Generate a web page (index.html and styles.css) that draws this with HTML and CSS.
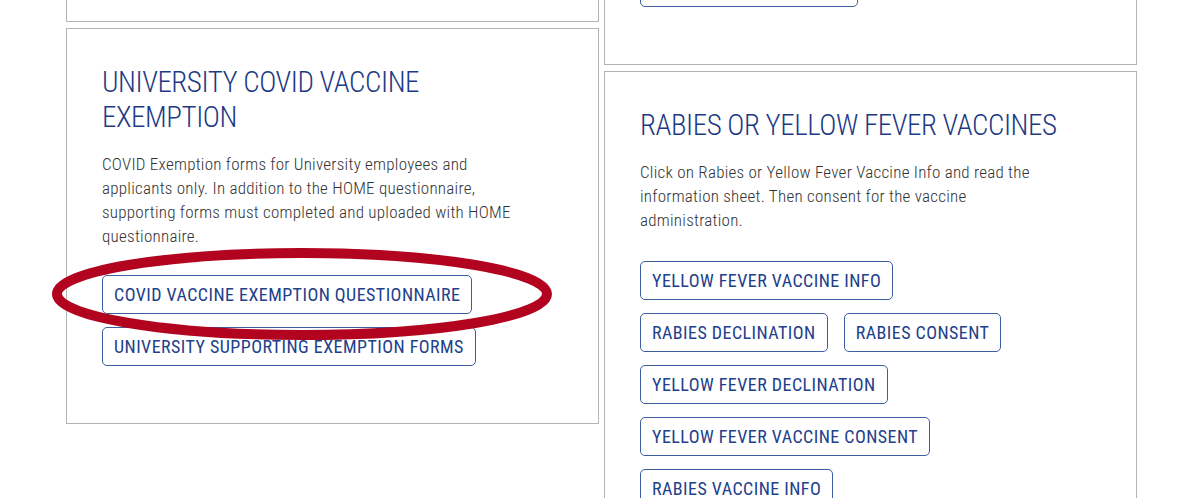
FILE: index.html
```html
<!DOCTYPE html>
<html lang="en">
<head>
<meta charset="utf-8">
<title>Vaccine Forms</title>
<link rel="stylesheet" href="styles.css">
</head>
<body>
<div class="page">
  <div class="grid">
    <div class="col">
      <section class="card card-stub-left"></section>
      <section class="card">
        <h2 class="card-title">UNIVERSITY COVID VACCINE EXEMPTION</h2>
        <p class="card-text">COVID Exemption forms for University employees and applicants only. In addition to the HOME questionnaire, supporting forms must completed and uploaded with HOME questionnaire.</p>
        <div class="btn-stack">
          <div class="btn-row"><a class="btn" href="#">COVID VACCINE EXEMPTION QUESTIONNAIRE</a></div>
          <div class="btn-row"><a class="btn" href="#">UNIVERSITY SUPPORTING EXEMPTION FORMS</a></div>
        </div>
      </section>
    </div>
    <div class="col">
      <section class="card card-stub-right">
        <div class="btn-stack">
          <div class="btn-row"><a class="btn btn-fixed" href="#" aria-label="More forms"></a></div>
        </div>
      </section>
      <section class="card card-rabies">
        <h2 class="card-title">RABIES OR YELLOW FEVER VACCINES</h2>
        <p class="card-text">Click on Rabies or Yellow Fever Vaccine Info and read the information sheet. Then consent for the vaccine administration.</p>
        <div class="btn-stack">
          <div class="btn-row"><a class="btn" href="#">YELLOW FEVER VACCINE INFO</a></div>
          <div class="btn-row"><a class="btn" href="#">RABIES DECLINATION</a><a class="btn" href="#">RABIES CONSENT</a></div>
          <div class="btn-row"><a class="btn" href="#">YELLOW FEVER DECLINATION</a></div>
          <div class="btn-row"><a class="btn" href="#">YELLOW FEVER VACCINE CONSENT</a></div>
          <div class="btn-row"><a class="btn" href="#">RABIES VACCINE INFO</a></div>
        </div>
      </section>
    </div>
  </div>
  <svg class="highlight" width="520" height="110" viewBox="0 0 520 110" aria-hidden="true">
    <ellipse cx="260" cy="55" rx="245" ry="41" fill="none" stroke="#b2031f" stroke-width="10"/>
  </svg>
</div>
</body>
</html>
```
FILE: styles.css
```css
html, body {
  margin: 0;
  padding: 0;
  background: #ffffff;
}
body {
  font-family: "Roboto Condensed", "Roboto", "Liberation Sans", sans-serif;
  overflow: hidden;
}
.page {
  position: relative;
  width: 1200px;
  height: 498px;
  overflow: hidden;
}
.grid {
  display: grid;
  grid-template-columns: 533px 533px;
  column-gap: 5px;
  align-items: start;
  margin: -60px 0 0 66px;
}
.col {
  display: flex;
  flex-direction: column;
  gap: 6px;
}
.card {
  border: 1px solid #b4b4b4;
  padding: 36px 35px 57px 35px;
  background: #fff;
}
.card-stub-left {
  height: 82px;
  padding: 0;
  box-sizing: border-box;
}
.card-stub-right {
  padding-top: 27px;
}
.card-title {
  margin: 0 0 17px;
  font-weight: 300;
  font-size: 29px;
  line-height: 35px;
  color: #1d3a85;
  letter-spacing: -0.45px;
  max-width: 425px;
}
.card-text {
  margin: 0 0 27px;
  font-size: 17px;
  line-height: 24px;
  color: #333333;
  font-weight: 300;
  letter-spacing: 0.25px;
  max-width: 422px;
}
.card-rabies .card-text {
  margin-bottom: 29px;
}
.btn-stack {
  display: flex;
  flex-direction: column;
  gap: 13px;
}
.btn-row {
  display: flex;
  gap: 16px;
}
.btn {
  display: inline-flex;
  align-items: center;
  height: 39px;
  box-sizing: border-box;
  padding: 0 11px;
  border: 1px solid #3c5da0;
  border-radius: 5px;
  color: #22408a;
  font-size: 18px;
  letter-spacing: 0.45px;
  text-decoration: none;
  white-space: nowrap;
}
.btn-fixed {
  width: 218px;
}
.highlight {
  position: absolute;
  left: 42px;
  top: 239px;
  pointer-events: none;
}
```
